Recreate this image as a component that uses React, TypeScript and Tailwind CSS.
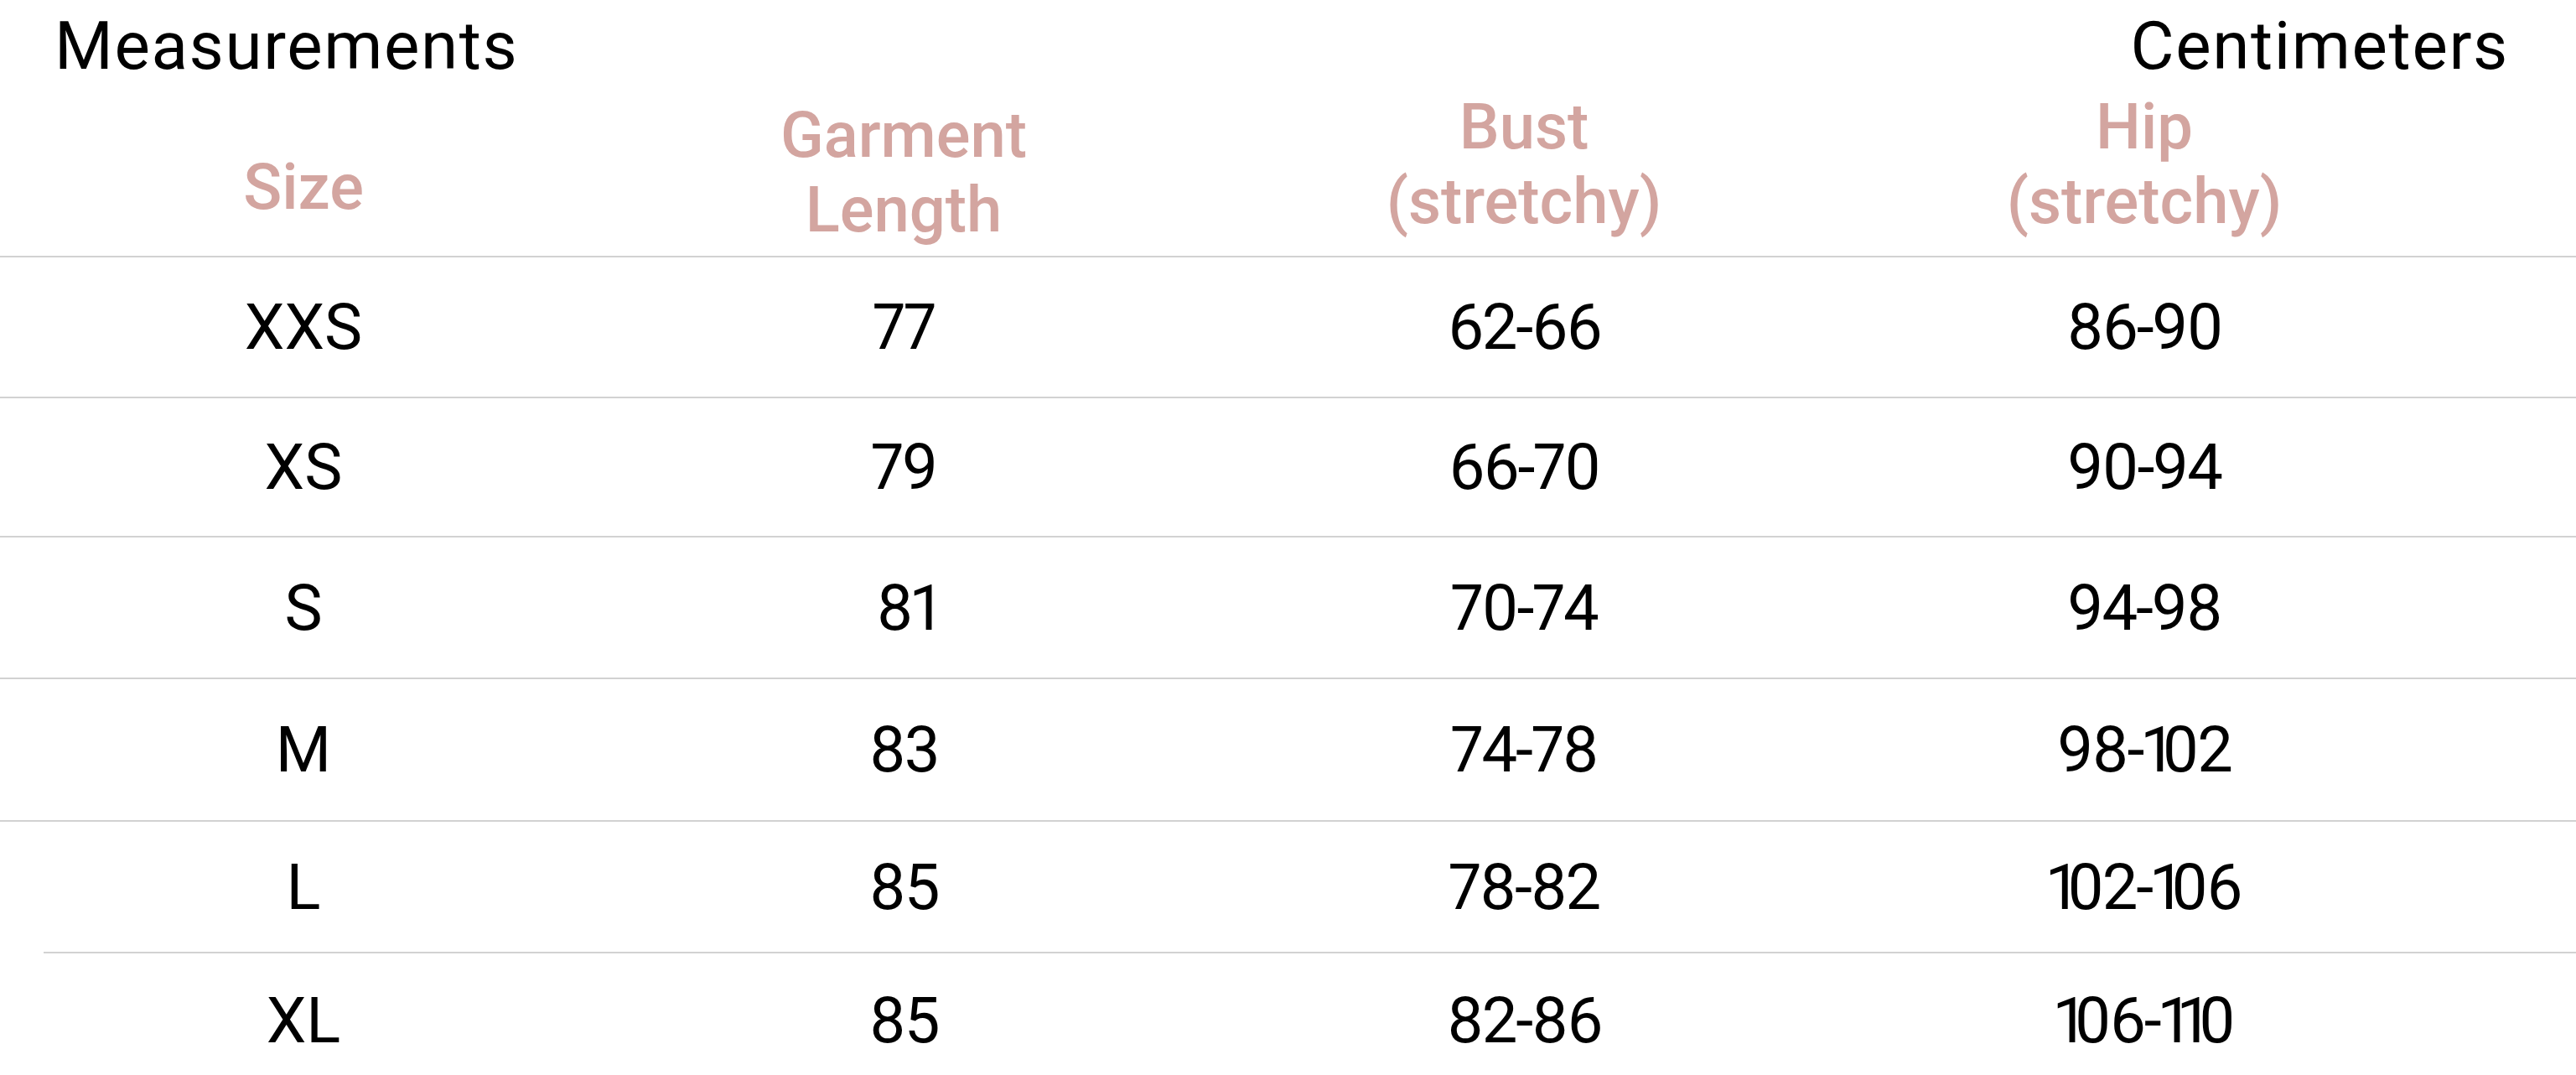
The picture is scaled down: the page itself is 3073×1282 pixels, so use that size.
import React from "react";

const rows = [
  { size: "XXS", len: "77", bust: "62-66", hip: "86-90", h: "h-[166px]", line: "" },
  { size: "XS", len: "79", bust: "66-70", hip: "90-94", h: "h-[164px]", line: "" },
  { size: "S", len: "81", bust: "70-74", hip: "94-98", h: "h-[167px]", line: "" },
  { size: "M", len: "83", bust: "74-78", hip: "98-102", h: "h-[168px]", line: "" },
  { size: "L", len: "85", bust: "78-82", hip: "102-106", h: "h-[155px]", line: "" },
  { size: "XL", len: "85", bust: "82-86", hip: "106-110", h: "h-[160px]", line: "ml-[52px]" },
];

const grid = "grid grid-cols-[724px_708px_772px_708px]";

function Num({ v }: { v: string }) {
  return (
    <div className="text-center proportional-nums tracking-[-0.03em]">
      {v.split("").map((c, i) =>
        c === "1" ? (
          <span key={i} className="tracking-[-0.13em]">
            1
          </span>
        ) : (
          <span key={i}>{c}</span>
        )
      )}
    </div>
  );
}

export default function App() {
  return (
    <div
      className="w-[3073px] h-[1282px] overflow-hidden bg-white text-black"
      style={{ fontFamily: "Roboto, 'Noto Sans', sans-serif" }}
    >
      <div className="flex justify-between pl-[65px] pr-[80px] pt-[15px] h-[95px] text-[80px] leading-[80px] tracking-[0.02em]">
        <span>Measurements</span>
        <span>Centimeters</span>
      </div>

      <div className={`${grid} h-[210px] text-[76px] leading-[89px] font-medium text-[#d3a5a0]`}>
        <div className="flex flex-col items-center pt-[84px]">
          <span>Size</span>
        </div>
        <div className="flex flex-col items-center pt-[22px]">
          <span>Garment</span>
          <span>Length</span>
        </div>
        <div className="flex flex-col items-center pt-[12px]">
          <span>Bust</span>
          <span>(stretchy)</span>
        </div>
        <div className="flex flex-col items-center pt-[12px]">
          <span>Hip</span>
          <span>(stretchy)</span>
        </div>
      </div>

      {rows.map((r) => (
        <div key={r.size} className="flex flex-col">
          <div className={`h-[2px] bg-[#d2d2d2] ${r.line}`} />
          <div className={`${grid} ${r.h} items-center text-[76px] leading-[76px]`}>
            <div className="text-center">{r.size}</div>
            <Num v={r.len} />
            <Num v={r.bust} />
            <Num v={r.hip} />
          </div>
        </div>
      ))}
    </div>
  );
}
